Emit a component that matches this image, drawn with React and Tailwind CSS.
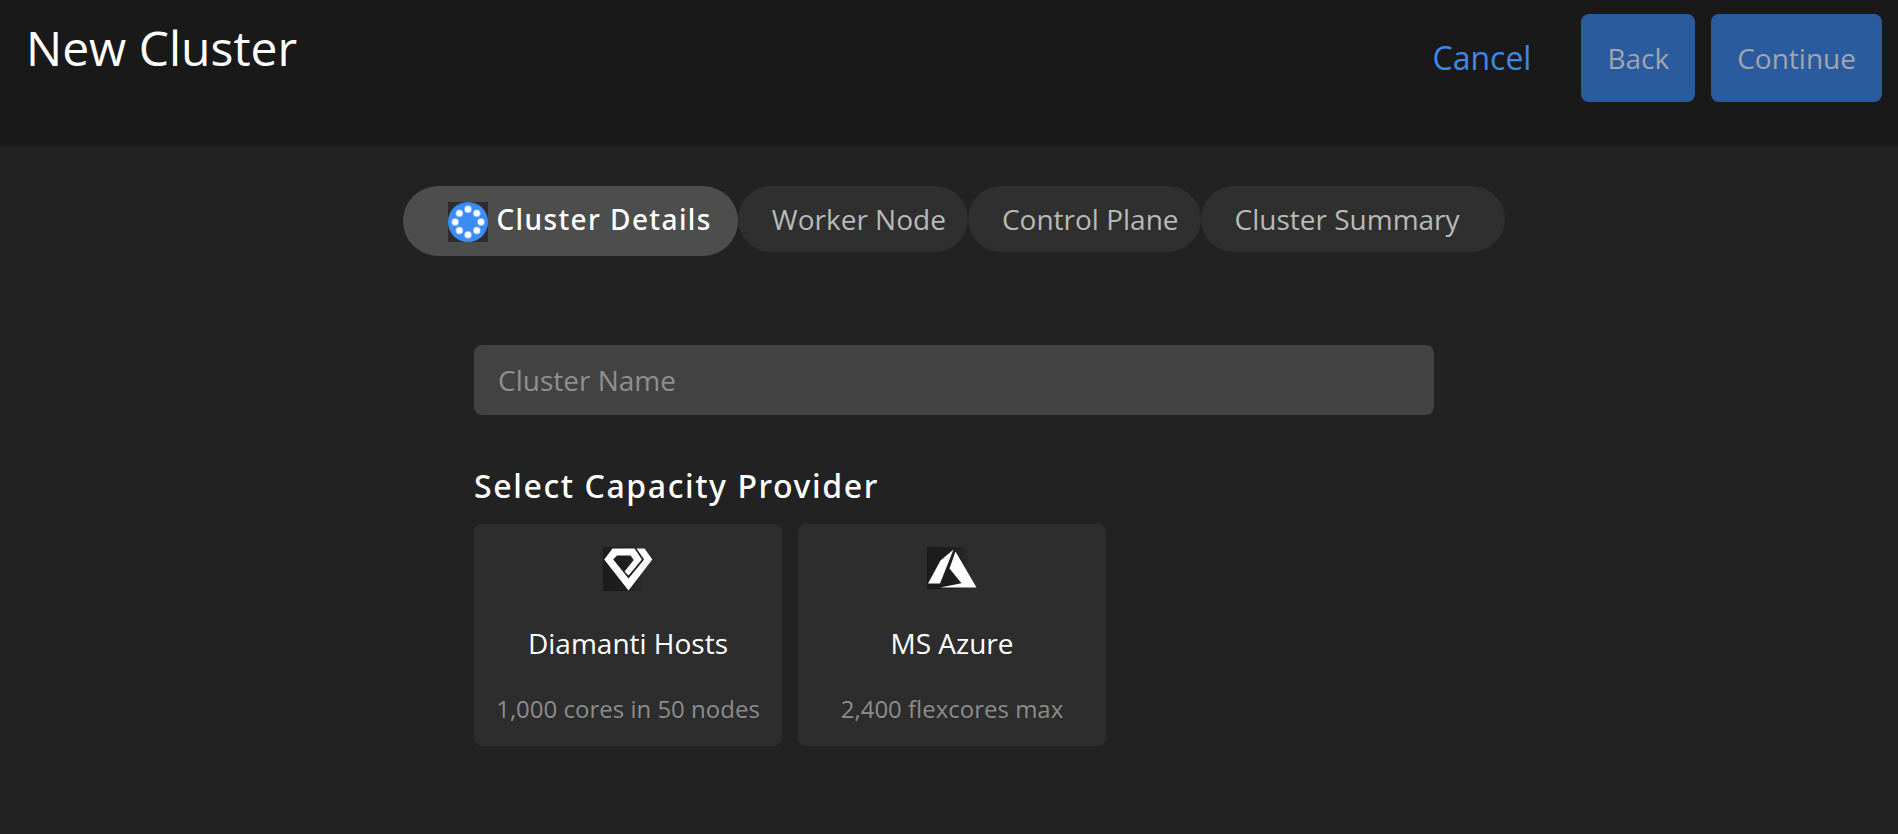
import React, { useState } from "react";

function NodesIcon() {
  const dots = [
    [20, 7.2], [28.8, 11.3], [33, 20], [28.8, 28.5],
    [20, 32.8], [11.4, 28.5], [7.2, 20], [11.4, 11.3],
  ];
  return (
    <svg viewBox="0 0 40 40" className="mt-4 size-10 shrink-0" aria-hidden="true">
      <rect width="40" height="40" fill="#2c2d2f" />
      <circle cx="20" cy="20" r="20" fill="#3b8df3" />
      {dots.map(([cx, cy]) => (
        <g key={`${cx}-${cy}`}>
          <circle cx={cx} cy={cy} r="3.9" fill="#8fc0fa" />
          <circle cx={cx} cy={cy} r="3" fill="#fff" />
        </g>
      ))}
    </svg>
  );
}

function DiamantiIcon() {
  return (
    <svg viewBox="0 0 50 44" className="h-11 w-[50px]" aria-hidden="true">
      <defs>
        <linearGradient id="diamanti-shade" x1="0" y1="0" x2="1" y2="0">
          <stop offset="0" stopColor="#1c1c1c" />
          <stop offset="0.45" stopColor="#1e1e1e" />
          <stop offset="0.8" stopColor="#2d2d2d" />
        </linearGradient>
      </defs>
      <rect width="50" height="44" fill="url(#diamanti-shade)" />
      <path
        fill="#fff"
        fillRule="evenodd"
        d="M9.5 1.5H31.5L38.8 12.5L25.5 28.5L21.5 24.4L30.8 13L27.5 8.5H14L10.2 12.5L25.5 31.5L41.2 12.5L33.5 1.5H41.5L49.3 12.5L25.5 43.5L1.2 12.5Z"
      />
    </svg>
  );
}

function AzureIcon() {
  return (
    <svg viewBox="0 0 50 44" className="h-11 w-[50px]" aria-hidden="true">
      <defs>
        <linearGradient id="azure-shade" x1="0" y1="0" x2="1" y2="0">
          <stop offset="0" stopColor="#1c1c1c" />
          <stop offset="0.55" stopColor="#1e1e1e" />
          <stop offset="0.85" stopColor="#2d2d2d" />
        </linearGradient>
      </defs>
      <rect width="50" height="42" fill="url(#azure-shade)" />
      <path fill="#fff" d="M26.5 2.5L13.5 13.5L1 36.5H13Z" />
      <path fill="#fff" d="M28.5 4.5L22.5 21.5L34.5 36.2L13 40.5H49.5Z" />
    </svg>
  );
}

const steps = [
  { label: "Cluster Details", box: "pl-[45px] pr-[26px]" },
  { label: "Worker Node", box: "pl-[34px] pr-[22px]" },
  { label: "Control Plane", box: "pl-[34px] pr-[22px]" },
  { label: "Cluster Summary", box: "pl-[34px] pr-[45px]" },
];

const providers = [
  { name: "Diamanti Hosts", detail: "1,000 cores in 50 nodes", Icon: DiamantiIcon },
  { name: "MS Azure", detail: "2,400 flexcores max", Icon: AzureIcon },
];

export default function App() {
  const [name, setName] = useState("");
  return (
    <div className="min-h-screen bg-[#222222] font-['Open_Sans','Noto_Sans',sans-serif] text-white">
      <header className="flex items-start justify-between bg-[#191919] pt-3.5 pr-4 pb-11 pl-[26px]">
        <h1 className="text-[48px] leading-[68px]">New Cluster</h1>
        <div className="flex items-center gap-4">
          <button type="button" className="mr-[34px] text-[32px] leading-[44px] text-[#4088e8]">
            Cancel
          </button>
          <button type="button" disabled className="h-[88px] rounded-lg bg-[#2a5b9f] px-[26px] text-[28px] text-[#a2a5aa]">
            Back
          </button>
          <button type="button" disabled className="h-[88px] rounded-lg bg-[#2a5b9f] px-[26px] text-[28px] text-[#a2a5aa]">
            Continue
          </button>
        </div>
      </header>

      <main className="flex flex-col items-center pt-10 pb-20 pl-2.5">
        <nav aria-label="Steps" className="flex items-start text-[28px] leading-[66px]">
          {steps.map((step, i) =>
            i === 0 ? (
              <button
                key={step.label}
                type="button"
                aria-current="step"
                className={`flex h-[70px] items-start gap-2 rounded-full bg-[#4d4d4d] font-['Noto_Sans',sans-serif] font-medium tracking-wider ${step.box}`}
              >
                <NodesIcon />
                {step.label}
              </button>
            ) : (
              <button
                key={step.label}
                type="button"
                className={`h-[66px] rounded-full bg-[#2f2f2f] text-[#b9b9b9] ${step.box}`}
              >
                {step.label}
              </button>
            )
          )}
        </nav>

        <form className="mt-[89px] w-full max-w-[960px]" onSubmit={(e) => e.preventDefault()}>
          <input
            type="text"
            aria-label="Cluster Name"
            placeholder="Cluster Name"
            value={name}
            onChange={(e) => setName(e.target.value)}
            className="block h-[70px] w-full rounded-lg bg-[#424242] px-6 text-[28px] text-white outline-none placeholder:text-[#8f8f8f]"
          />
          <h2 className="mt-12 font-['Noto_Sans',sans-serif] text-[32px] leading-[46px] font-medium tracking-wider">
            Select Capacity Provider
          </h2>
          <div className="mt-[15px] flex flex-wrap gap-4">
            {providers.map(({ name: title, detail, Icon }) => (
              <button
                key={title}
                type="button"
                className="flex h-[222px] w-[308px] flex-col items-center rounded-lg bg-[#2d2d2d] pt-[23px]"
              >
                <Icon />
                <span className="mt-[33px] text-[28px] leading-[38px]">{title}</span>
                <span className="mt-[31px] text-[24px] leading-8 text-[#8c8c8c]">{detail}</span>
              </button>
            ))}
          </div>
        </form>
      </main>
    </div>
  );
}
